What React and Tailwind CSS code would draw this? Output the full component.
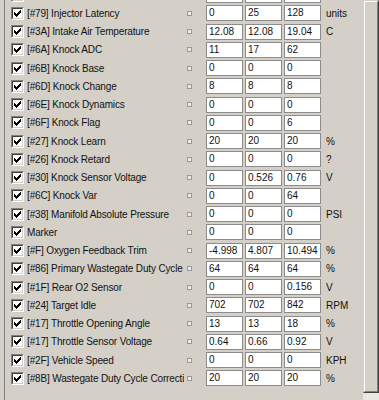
import React from 'react';

const rows = [
  ['', '', '', '', ''],
  ['[#79] Injector Latency', '0', '25', '128', 'units'],
  ['[#3A] Intake Air Temperature', '12.08', '12.08', '19.04', 'C'],
  ['[#6A] Knock ADC', '11', '17', '62', ''],
  ['[#6B] Knock Base', '0', '0', '0', ''],
  ['[#6D] Knock Change', '8', '8', '8', ''],
  ['[#6E] Knock Dynamics', '0', '0', '0', ''],
  ['[#6F] Knock Flag', '0', '0', '6', ''],
  ['[#27] Knock Learn', '20', '20', '20', '%'],
  ['[#26] Knock Retard', '0', '0', '0', '?'],
  ['[#30] Knock Sensor Voltage', '0', '0.526', '0.76', 'V'],
  ['[#6C] Knock Var', '0', '0', '64', ''],
  ['[#38] Manifold Absolute Pressure', '0', '0', '0', 'PSI'],
  ['Marker', '0', '0', '0', ''],
  ['[#F] Oxygen Feedback Trim', '-4.998', '4.807', '10.494', '%'],
  ['[#86] Primary Wastegate Duty Cycle', '64', '64', '64', '%'],
  ['[#1F] Rear O2 Sensor', '0', '0', '0.156', 'V'],
  ['[#24] Target Idle', '702', '702', '842', 'RPM'],
  ['[#17] Throttle Opening Angle', '13', '13', '18', '%'],
  ['[#17] Throttle Sensor Voltage', '0.64', '0.66', '0.92', 'V'],
  ['[#2F] Vehicle Speed', '0', '0', '0', 'KPH'],
  ['[#8B] Wastegate Duty Cycle Correction', '20', '20', '20', '%'],
];

function Check() {
  return (
    <div className="ml-[6px] h-[13px] w-[13px] shrink-0 border border-t-[#808080] border-l-[#808080] border-b-white border-r-white">
      <div className="flex h-full w-full items-center justify-center border border-t-[#404040] border-l-[#404040] border-b-[#d4d0c8] border-r-[#d4d0c8] bg-white">
        <svg width="7" height="7" viewBox="0 0 7 7">
          <path d="M0 2h1v1h1v1h1v-1h1v-1h1v-1h1v-1h1v3h-1v1h-1v1h-1v1h-1v1h-1v-1h-1v-1h-1v-1h-1z" fill="#000" />
        </svg>
      </div>
    </div>
  );
}

function Box({ v }) {
  return (
    <div className="h-[16px] w-[37px] shrink-0 overflow-hidden whitespace-nowrap border border-[#8c8c8c] bg-white pl-[2px] leading-[14px]">
      {v}
    </div>
  );
}

export default function App() {
  return (
    <div className="flex h-[400px] w-[379px] overflow-hidden bg-[#d4d0c8] font-['Liberation_Sans',Arial,sans-serif] text-[10px] text-[#111]">
      <div className="w-[5px] shrink-0 border-r border-[#808080]" />
      <div className="flex-1 overflow-hidden">
        <div className="-mt-[14px]">
          {rows.map((r, i) => (
            <div key={i} className="flex h-[18.25px] items-center">
              <Check />
              <div className="ml-[3px] w-[157px] shrink-0 overflow-hidden whitespace-nowrap tracking-[-0.15px]">{r[0]}</div>
              <div className="ml-[3px] h-[5px] w-[5px] shrink-0 border border-[#9a9a9a] bg-[#ecebe8]" />
              <div className="ml-[14px] flex gap-[2px]">
                <Box v={r[1]} />
                <Box v={r[2]} />
                <Box v={r[3]} />
              </div>
              <div className="ml-[5px] whitespace-nowrap">{r[4]}</div>
            </div>
          ))}
        </div>
      </div>
      <div className="flex w-[16px] shrink-0 flex-col">
        <div className="flex-1 border border-t-[#d4d0c8] border-l-[#d4d0c8] border-b-[#404040] border-r-[#404040]">
          <div className="h-full border border-t-white border-l-white border-b-[#808080] border-r-[#808080]" />
        </div>
        <div className="h-[7px] bg-[#e9e7e3]" />
      </div>
    </div>
  );
}
